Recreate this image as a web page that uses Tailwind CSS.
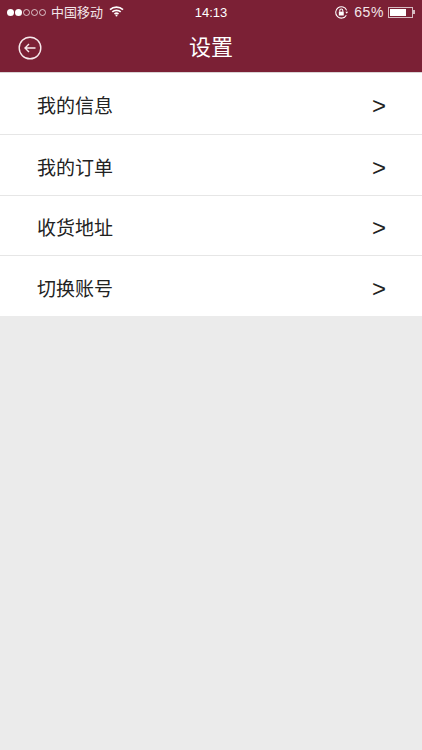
<!DOCTYPE html>
<html lang="zh">
<head>
   <meta charset="utf-8"/>
   <meta name="viewport" content="width=device-width, initial-scale=1"/>
   <script src="https://cdn.jsdelivr.net/npm/@tailwindcss/browser@4"></script>
   <title>设置</title>
</head>
<body class="bg-[#ebebeb] font-['Liberation_Sans','Noto_Sans_CJK_SC',sans-serif]">
   <div class="w-[422px] h-[750px] overflow-hidden">
      <!-- status bar -->
      <header class="bg-[#7b2035] text-white h-[73px] border-b border-[#d9d4d5]">
         <div class="h-[24px] flex items-center justify-between pl-[7px] pr-[7px] text-[#f3e6e9]">
            <div class="flex items-center flex-1">
               <div class="flex gap-[1px]">
                  <span class="w-[7px] h-[7px] rounded-full bg-white"></span>
                  <span class="w-[7px] h-[7px] rounded-full bg-white"></span>
                  <span class="w-[7px] h-[7px] rounded-full border border-white/70"></span>
                  <span class="w-[7px] h-[7px] rounded-full border border-white/70"></span>
                  <span class="w-[7px] h-[7px] rounded-full border border-white/70"></span>
               </div>
               <span class="ml-[5px] text-[13px] leading-none">中国移动</span>
               <svg class="ml-[6px] -mt-[2px]" width="15" height="11" viewBox="0 0 15 11" fill="none" stroke="white" stroke-width="1.7">
                  <path d="M1 3.6C4.6 0.4 10.4 0.4 14 3.6"/>
                  <path d="M3.3 5.9C5.6 3.9 9.4 3.9 11.7 5.9"/>
                  <path d="M5.5 8C6.6 7.1 8.4 7.1 9.5 8"/>
                  <circle cx="7.5" cy="9.6" r="1" fill="white" stroke="none"/>
               </svg>
            </div>
            <span class="text-[13px] text-white leading-none pt-[1px]">14:13</span>
            <div class="flex items-center justify-end flex-1">
               <svg width="15" height="15" viewBox="0 0 14 14" fill="none" stroke="white" stroke-width="1">
                  <path d="M11.5 9.5A5.3 5.3 0 1 1 11.8 5"/>
                  <path d="M10.6 6.4L13.2 6.4L11.9 8.2Z" fill="white" stroke="none"/>
                  <rect x="4.5" y="6.2" width="4.6" height="3.6" fill="white" stroke="none"/>
                  <path d="M5.4 6.2V5.2A1.4 1.4 0 0 1 8.2 5.2V6.2"/>
               </svg>
               <span class="ml-[5px] text-[14px] tracking-[0.6px] leading-none">65%</span>
               <div class="ml-[4px] flex items-center">
                  <div class="w-[25px] h-[11px] border border-white/70 p-[1px]">
                     <div class="w-[16px] h-full bg-white"></div>
                  </div>
                  <span class="w-[2px] h-[4px] bg-white/70"></span>
               </div>
            </div>
         </div>
         <!-- nav bar -->
         <div class="relative h-[48px] flex items-center justify-center">
            <svg class="absolute left-[18px] top-[12px]" width="24" height="24" viewBox="0 0 24 24" fill="none" stroke="#f7e9ec" stroke-width="1.4">
               <circle cx="12" cy="12" r="10.8"/>
               <path d="M17.5 12H7M11 8L7 12L11 16"/>
            </svg>
            <h1 class="text-[22px] leading-none">设置</h1>
         </div>
      </header>
      <!-- menu -->
      <ul class="bg-white text-[#222] text-[19px]">
         <li class="h-[62px] pl-[37px] pr-[36px] flex items-center justify-between border-b border-[#e6e6e6]"><span class="leading-none pt-[6px]">我的信息</span><span class="text-[24px] font-light leading-none pt-[5px]">&gt;</span></li>
         <li class="h-[61px] pl-[37px] pr-[36px] flex items-center justify-between border-b border-[#e6e6e6]"><span class="leading-none pt-[6px]">我的订单</span><span class="text-[24px] font-light leading-none pt-[5px]">&gt;</span></li>
         <li class="h-[60px] pl-[37px] pr-[36px] flex items-center justify-between border-b border-[#e6e6e6]"><span class="leading-none pt-[6px]">收货地址</span><span class="text-[24px] font-light leading-none pt-[5px]">&gt;</span></li>
         <li class="h-[60px] pl-[37px] pr-[36px] flex items-center justify-between"><span class="leading-none pt-[6px]">切换账号</span><span class="text-[24px] font-light leading-none pt-[5px]">&gt;</span></li>
      </ul>
   </div>
</body>
</html>
